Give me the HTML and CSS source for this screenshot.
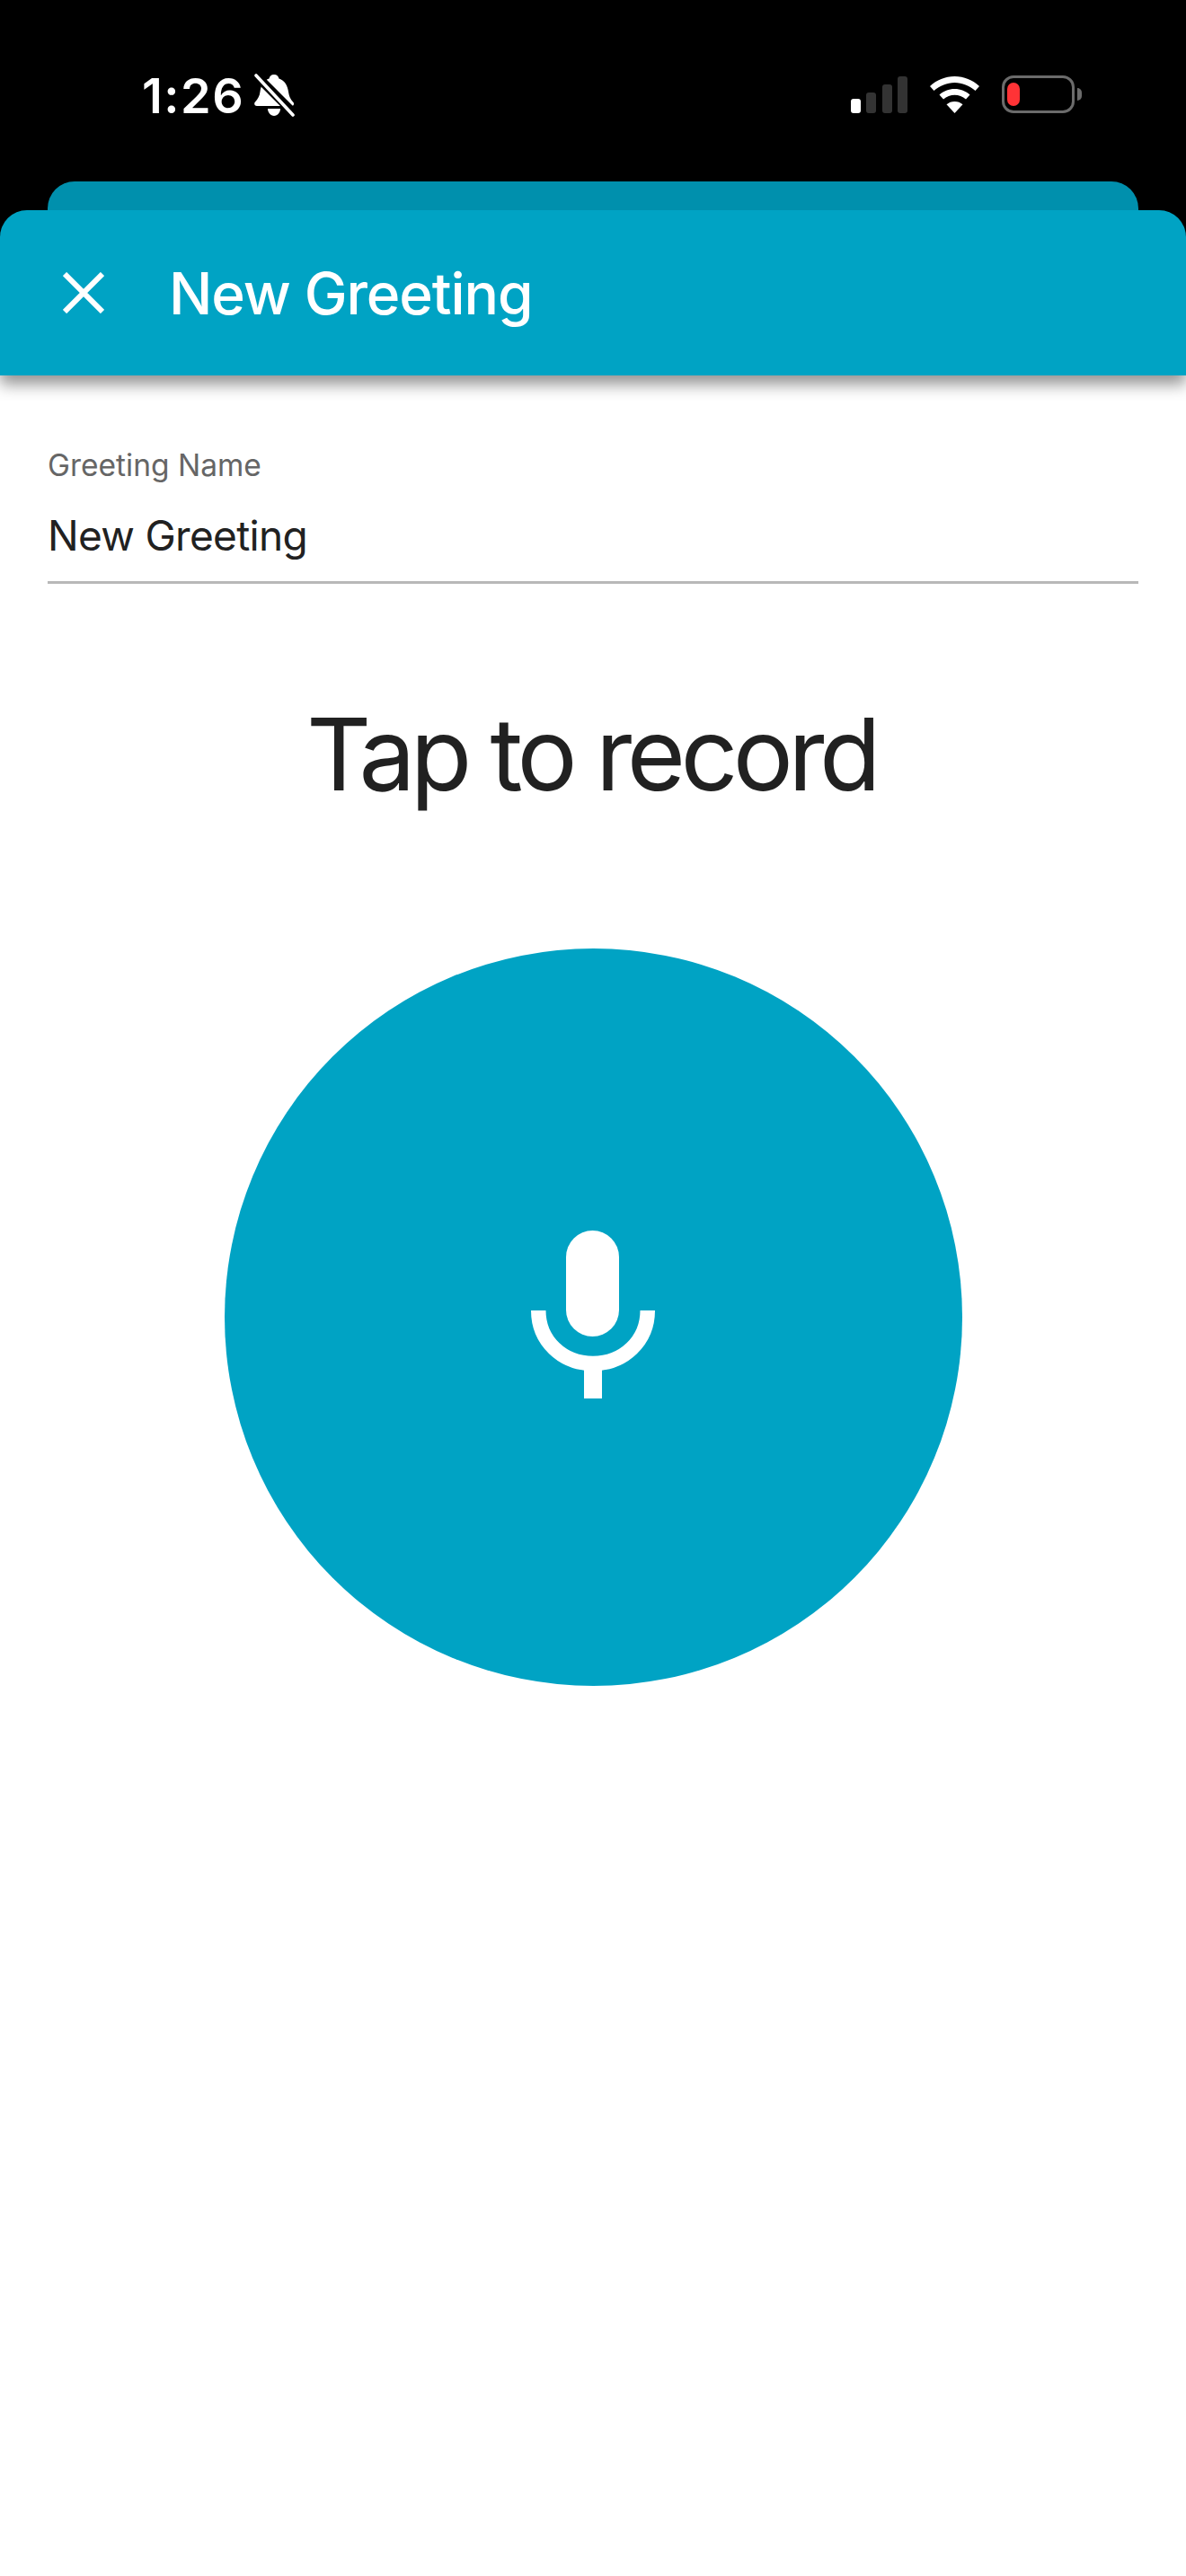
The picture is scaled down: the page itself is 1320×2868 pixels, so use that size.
FILE: index.html
```html
<!DOCTYPE html>
<html lang="en">
<head>
<meta charset="utf-8">
<title>New Greeting</title>
<link rel="stylesheet" href="styles.css">
</head>
<body>
<div class="screen">
  <div class="top">
    <div class="status">
      <div class="status-left">
        <span class="time">1:26</span>
        <svg class="bell" width="46" height="48" viewBox="0 0 46 48">
          <path fill="#fff" d="M23 1c3 0 5 2 5.500 4.500C35 8 38 13 39 20c.8 5 2 8 5.500 12 1.200 1.500.5 4-2 4H4c-3 0-3.500-3-2-4.500C5 28 7 25 7.500 20 8.500 12 12 7.500 17.500 5.500 18 3 20 1 23 1z"/>
          <path fill="#fff" d="M16 39h14c0 4-3 8-7 8s-7-4-7-8z"/>
          <path stroke="#000" stroke-width="10" d="M0 -1 L46 45"/>
          <path stroke="#fff" stroke-width="3.600" stroke-linecap="round" d="M3 2 L44 46"/>
        </svg>
      </div>
      <div class="status-right">
        <svg width="63" height="41" viewBox="0 0 63 41">
          <rect x="0" y="25" width="11" height="16" rx="3" fill="#fff"/>
          <rect x="17" y="18" width="11" height="23" rx="3" fill="#333"/>
          <rect x="35" y="9" width="11" height="32" rx="3" fill="#333"/>
          <rect x="52" y="0" width="11" height="41" rx="3" fill="#333"/>
        </svg>
        <svg width="55" height="41" viewBox="0 0 55 41">
          <path fill="#fff" d="M27.500 0C38 0 47.500 4 55 11l-4.500 5C44 10.500 36 7 27.500 7S11 10.500 4.500 16L0 11C7.500 4 17 0 27.500 0z"/>
          <path fill="#fff" d="M27.500 14c6.500 0 12.500 2.500 17 6.500L40 25.500c-3.500-3-8-4.800-12.500-4.800S18.500 22.500 15 25.500l-4.500-5C15 16.500 21 14 27.500 14z"/>
          <path fill="#fff" d="M27.500 28c3.500 0 6.500 1.200 9 3.300L27.500 41l-9-9.700c2.500-2.100 5.500-3.300 9-3.300z"/>
        </svg>
        <div class="battery">
          <div class="battery-body"><div class="battery-level"></div></div>
          <div class="battery-cap"></div>
        </div>
      </div>
    </div>
    <div class="back-sheet"></div>
    <header class="appbar">
      <svg class="close" width="46" height="46" viewBox="0 0 46 46">
        <path stroke="#fff" stroke-width="6" fill="none" d="M2 2 L44 44 M44 2 L2 44"/>
      </svg>
      <h1 class="title">New Greeting</h1>
    </header>
  </div>
  <main class="content">
    <div class="field">
      <div class="field-label">Greeting Name</div>
      <div class="field-value">New Greeting</div>
    </div>
    <h2 class="prompt">Tap to record</h2>
    <div class="record">
      <svg class="mic" width="138" height="187" viewBox="0 0 138 187">
        <rect x="39" y="0" width="59" height="118" rx="29.500" fill="#fff"/>
        <path fill="none" stroke="#fff" stroke-width="16.500" d="M8.250 89 C8.250 123 35 148 69 148 S129.750 123 129.750 89"/>
        <rect x="59" y="148" width="20" height="39" fill="#fff"/>
      </svg>
    </div>
  </main>
</div>
</body>
</html>
```
FILE: styles.css
```css
* { box-sizing: border-box; }
html, body { margin: 0; padding: 0; background: #fff; }
body { font-family: Inter, "Liberation Sans", sans-serif; }
.screen { width: 1320px; height: 2868px; display: flex; flex-direction: column; background: #fff; overflow: hidden; }
.top { background: #000; display: flex; flex-direction: column; position: relative; z-index: 1; box-shadow: 0 10px 16px rgba(0,0,0,.42); }
.status { height: 202px; display: flex; justify-content: space-between; align-items: flex-start; padding: 82px 116px 0 158px; }
.status-left { display: flex; align-items: flex-start; gap: 10px; }
.time { color: #fff; font-size: 54px; font-weight: 600; line-height: 46px; margin-top: 2px; letter-spacing: 1.500px; }
.status-right { display: flex; align-items: center; gap: 25px; margin-top: 2px; }
.battery { display: flex; align-items: center; gap: 3px; }
.battery-body { width: 81px; height: 42px; border: 3px solid #6b6b6b; border-radius: 13px; padding: 5px 3px; }
.battery-level { width: 14px; height: 100%; background: #ff3336; border-radius: 7px; }
.battery-cap { width: 5px; height: 14px; background: #6b6b6b; border-radius: 0 7px 7px 0; }
.back-sheet { height: 32px; margin: 0 53px; background: #0090ad; border-radius: 30px 30px 0 0; }
.appbar { height: 184px; background: #00a3c4; border-radius: 30px 30px 0 0; display: flex; align-items: center; padding-left: 70px; gap: 72px; }
.close { flex: none; }
.title { margin: 0; color: #fff; font-size: 64px; font-weight: 500; line-height: 1; letter-spacing: -1.100px; padding-top: 2px; }
.content { display: flex; flex-direction: column; flex: 1; padding: 78px 53px 0; }
.field { border-bottom: 3px solid #b8b8b8; height: 154px; }
.field-label { color: #666; font-size: 33.500px; line-height: 44px; }
.field-value { color: #212121; font-size: 46px; line-height: 56px; margin-top: 28px; letter-spacing: -.7px; }
.prompt { margin: 0; text-align: center; color: #212121; font-size: 112px; font-weight: 400; line-height: 130px; padding: 124px 4px 0 0; letter-spacing: -5.600px; }
.record { width: 821px; height: 821px; margin: 0 auto; margin-top: 152px; border-radius: 50%; background: #00a3c4; display: flex; align-items: center; justify-content: center; flex: none; }
.mic { margin-bottom: 6px; }
```
